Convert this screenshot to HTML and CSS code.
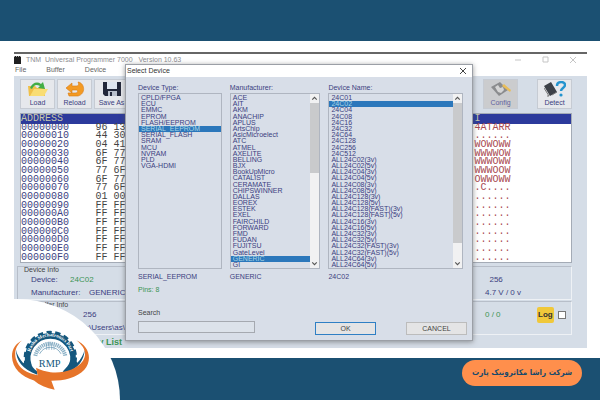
FILE: index.html
```
<!DOCTYPE html>
<html lang="en">
<head>
<meta charset="utf-8">
<title>TNM Universal Programmer 7000</title>
<link rel="stylesheet" href="styles.css">
</head>
<body>
<header class="band"></header>
<main class="stage">
  <div class="app">
    <div class="titlebar">
      <span class="chip"></span>
      <span class="app-title">TNM&nbsp; Universal Programmer 7000&nbsp;&nbsp; Version 10.63</span>
      <svg class="win-controls" viewBox="0 0 66 8"><path d="M2 4h6M30 1h5v5h-5zM57 1l6 6M63 1l-6 6"/></svg>
    </div>
    <nav class="menu"><a href="#">File</a><a href="#">Buffer</a><a href="#">Device</a></nav>
    <div class="workspace">
      <div class="toolbar">
        <button type="button" class="tool">
          <svg viewBox="0 0 22 16"><path d="M1 5h7l2 2h8v8H2z" fill="#f0c04a"/><path d="M3 15l4-7h14l-4 7z" fill="#f9dd73"/><path d="M3 7C5 2 10 0 14 3l2-2 2 7-7-1 2-2C9 3 7 4 5 8z" fill="#43ad45"/></svg>
          Load</button>
        <button type="button" class="tool">
          <svg viewBox="0 0 22 16"><path d="M2 7l6-5v3h4c3 0 3-2 2-4 7 1 8 12 0 14H5l-1-3h7c3 0 3-2 2-3H8v3z" fill="#f39a23" stroke="#d87a12" stroke-width=".6"/></svg>
          Reload</button>
        <button type="button" class="tool">
          <svg viewBox="0 0 22 16"><path d="M2 1h18v14H4l-2-2z" fill="#23283a"/><path d="M6 1h10v7H6z" fill="#dfe6f0"/><path d="M7 10h9v5H7z" fill="#b9c0cc"/><path d="M9 11h2v4H9z" fill="#23283a"/></svg>
          Save As</button>
        <span class="spacer"></span>
        <button type="button" class="tool off" disabled>
          <svg viewBox="0 0 22 16"><path d="M1 6l9-5 8 8-9 6z" fill="#8b8c8e"/><path d="M5 6l3-2 2 3 3-1 1 3-3 3-3-1z" fill="#d5d5d5"/><path d="M12 5l2-2 7 6-1 2z" fill="#e9bd58"/></svg>
          Config</button>
        <button type="button" class="tool">
          <svg viewBox="0 0 22 16"><path d="M0 5l7-4 6 10-7 4z" fill="#3c4047"/><path d="M0 7l5 8M3 15h2M8 14l5-3" stroke="#777" fill="none"/><path d="M13 5c0-5 8-5 8-1 0 3-4 3-4 6" fill="none" stroke="#2494cf" stroke-width="2.5"/><circle cx="17" cy="14" r="1.6" fill="#2494cf"/></svg>
          Detect</button>
      </div>
      <table class="hex">
        <thead><tr><th class="addr">ADDRESS</th><th class="bytes"></th><th class="ascii">I</th></tr></thead>
        <tbody>
          <tr><td>00000000</td><td>96 13</td><td>4ATARR</td></tr>
          <tr><td>00000010</td><td>44 30</td><td>......</td></tr>
          <tr><td>00000020</td><td>04 41</td><td>WOWOWW</td></tr>
          <tr><td>00000030</td><td>6F 77</td><td>WWWWOW</td></tr>
          <tr><td>00000040</td><td>6F 77</td><td>WWWOWW</td></tr>
          <tr><td>00000050</td><td>77 6F</td><td>WWWOOW</td></tr>
          <tr><td>00000060</td><td>6F 77</td><td>OWWOWW</td></tr>
          <tr><td>00000070</td><td>77 6F</td><td>.C....</td></tr>
          <tr><td>00000080</td><td>01 00</td><td>......</td></tr>
          <tr><td>00000090</td><td>FF FF</td><td>......</td></tr>
          <tr><td>000000A0</td><td>FF FF</td><td>......</td></tr>
          <tr><td>000000B0</td><td>FF FF</td><td>......</td></tr>
          <tr><td>000000C0</td><td>FF FF</td><td>......</td></tr>
          <tr><td>000000D0</td><td>FF FF</td><td>......</td></tr>
          <tr><td>000000E0</td><td>FF FF</td><td>......</td></tr>
          <tr><td>000000F0</td><td>FF FF</td><td>......</td></tr>
        </tbody>
      </table>
      <section class="group">
        <h2>Device Info</h2>
        <div class="line"><span class="key">Device:</span><span class="green">24C02</span><span class="far">&nbsp; 256</span></div>
        <div class="line"><span class="key wide">Manufacturer:</span><span>GENERIC</span><span class="far">4.7 V / 0 v</span></div>
      </section>
      <section class="group">
        <h2 class="inset">Buffer Info</h2>
        <div class="line"><span class="size">256</span><span class="far green">0 / 0</span><label class="log"><b>Log</b><input type="checkbox"></label></div>
        <div class="line"><span class="path">C:\Users\as\</span></div>
      </section>
      <a class="list-link" href="#">My List</a>
    </div>
  </div>

  <section class="dialog" role="dialog" aria-label="Select Device">
    <div class="dialog-title"><span>Select Device</span><button type="button" class="close" aria-label="Close"><svg viewBox="0 0 8 8"><path d="M1 1l6 6M7 1L1 7"/></svg></button></div>
    <div class="pickers">
      <div class="picker">
        <h3>Device Type:</h3>
        <div class="box"><ul>
          <li>CPLD/FPGA</li><li>ECU</li><li>EMMC</li><li>EPROM</li><li>FLASH/EEPROM</li><li class="sel">SERIAL_EEPROM</li><li>SERIAL_FLASH</li><li>SRAM</li><li>MCU</li><li>NVRAM</li><li>PLD</li><li>VGA-HDMI</li>
        </ul></div>
        <p>SERIAL_EEPROM</p>
      </div>
      <div class="picker">
        <h3>Manufacturer:</h3>
        <div class="box"><ul>
          <li>ACE</li><li>AIT</li><li>AKM</li><li>ANACHIP</li><li>APLUS</li><li>ArtsChip</li><li>AsicMicroelect</li><li>ATC</li><li>ATMEL</li><li>AXELITE</li><li>BELLING</li><li>BJX</li><li>BookUpMicro</li><li>CATALIST</li><li>CERAMATE</li><li>CHIPSWINNER</li><li>DALLAS</li><li>EOREX</li><li>ESTEK</li><li>EXEL</li><li>FAIRCHILD</li><li>FORWARD</li><li>FMD</li><li>FUDAN</li><li>FUJITSU</li><li>GateLevel</li><li class="sel">GENERIC</li><li>GI</li>
        </ul><div class="scroll"><svg viewBox="0 0 8 8"><path d="M2 5l2-2 2 2"/></svg><i class="thumb"></i><svg viewBox="0 0 8 8"><path d="M2 3l2 2 2-2"/></svg></div></div>
        <p>GENERIC</p>
      </div>
      <div class="picker">
        <h3>Device Name:</h3>
        <div class="box"><ul>
          <li>24C01</li><li class="sel">24C02</li><li>24C04</li><li>24C08</li><li>24C16</li><li>24C32</li><li>24C64</li><li>24C128</li><li>24C256</li><li>24C512</li><li>ALL24C02(3v)</li><li>ALL24C02(5v)</li><li>ALL24C04(3v)</li><li>ALL24C04(5v)</li><li>ALL24C08(3v)</li><li>ALL24C08(5v)</li><li>ALL24C128(3v)</li><li>ALL24C128(5v)</li><li>ALL24C128(FAST)(3v)</li><li>ALL24C128(FAST)(5v)</li><li>ALL24C16(3v)</li><li>ALL24C16(5v)</li><li>ALL24C32(3v)</li><li>ALL24C32(5v)</li><li>ALL24C32(FAST)(3v)</li><li>ALL24C32(FAST)(5v)</li><li>ALL24C64(3v)</li><li>ALL24C64(5v)</li>
        </ul><div class="scroll"><svg viewBox="0 0 8 8"><path d="M2 5l2-2 2 2"/></svg><i class="thumb long"></i><svg viewBox="0 0 8 8"><path d="M2 3l2 2 2-2"/></svg></div></div>
        <p>24C02</p>
      </div>
    </div>
    <p class="pins">Pins: 8</p>
    <label class="search-label" for="search">Search</label>
    <div class="actions">
      <input id="search" type="text">
      <button type="button" class="ok">OK</button>
      <button type="button" class="cancel">CANCEL</button>
    </div>
  </section>
</main>
<footer class="band foot"><span class="pill" lang="fa" dir="rtl">شرکت راشا مکاترونیک پارت</span></footer>

<div class="corner">
  <svg class="logo" viewBox="30 20 240 200" role="img" aria-label="Rasha Mechatronics Part">
    <path d="M48 88C48 120 67 147 112 163L112 153C101 146 94 136 90 124L80 114L70 128C59 116 51 103 48 88zM254 88C253 119 235 143 199 158L188 153C199 143 207 132 212 121L222 114L232 127C243 116 250 104 254 88z" fill="#14577d"/>
    <clipPath id="top"><path d="M30 20h240v112H30z"/></clipPath>
    <circle cx="151" cy="111" r="75" fill="none" stroke="#14577d" stroke-width="10" stroke-dasharray="16 10.5" pathLength="477" clip-path="url(#top)"/>
    <path d="M87 137A68 68 0 1 1 215 137" fill="none" stroke="#14577d" stroke-width="17"/>
    <path id="arc" d="M94 134A62 62 0 1 1 208 134" fill="none"/>
    <text class="arc-text"><textPath href="#arc" startOffset="50%" text-anchor="middle">Rasha Mechatronics Part</textPath></text>
    <path d="M106 106A46 46 0 0 1 196 106" fill="none" stroke="#8db2c7" stroke-width="12" stroke-dasharray="4 2"/>
    <path d="M119 100A36 36 0 0 1 183 100" fill="none" stroke="#8db2c7" stroke-width="3"/>
    <path d="M140 88V72M147 88V64M155 88V68M162 88V76" fill="none" stroke="#6d9cb7" stroke-width="2"/>
    <path d="M66 60C50 73 42 92 47 113C55 144 82 158 113 164L108 142C124 151 137 153 151 155C190 159 231 148 249 121C263 98 252 77 229 59C267 76 279 116 253 148C231 172 192 181 154 181L164 208C139 202 118 194 102 180C64 169 37 143 36 109C35 87 47 69 66 60z" fill="#e6742a"/>
    <text class="rmp" x="149" y="138" text-anchor="middle">RMP</text>
  </svg>
</div>
</body>
</html>
```
FILE: styles.css
```
* { box-sizing: border-box; }
body {
  margin: 0;
  min-height: 100vh;
  display: flex;
  flex-direction: column;
  position: relative;
  background: #fff;
  color: #3b4080;
  font: 7px/8px "Liberation Sans", Arial, sans-serif;
}
h2, h3, p, ul { margin: 0; padding: 0; font-size: inherit; font-weight: normal; }
a { color: inherit; text-decoration: none; }
button { font: inherit; color: inherit; padding: 0; }

.band { flex: none; height: 41px; background: #1b5072; }
.foot { height: 42px; display: flex; justify-content: flex-end; align-items: flex-start; padding: 2px 18px; }
.pill {
  min-width: 120px;
  padding: 0 8px;
  border-radius: 13px;
  background: #ff8f4c;
  color: #174a6b;
  text-align: center;
  font: bold 8px/26px "DejaVu Sans Condensed", "DejaVu Sans", sans-serif;
}
.stage { flex: 1; position: relative; padding: 11px 13px 8px 14px; }

.app { height: 100%; display: flex; flex-direction: column; border-top: 2px solid #666; }
.titlebar { display: flex; align-items: center; height: 12px; gap: 5px; color: #8c8c90; }
.chip { width: 7px; height: 8px; background: #202020; border-top: 1px dotted #aaa; }
.win-controls { width: 66px; height: 8px; margin-left: auto; margin-right: 8px; fill: none; stroke: #c5c5c5; }
.menu { display: flex; gap: 20px; height: 10px; padding-left: 1px; color: #666; }
.workspace { flex: 1; padding: 3px 15px 0 3px; background: #d5dde7; }

.toolbar { display: flex; gap: 2px; padding-left: 3px; }
.tool {
  width: 35px;
  height: 30px;
  display: flex;
  flex-direction: column;
  align-items: center;
  justify-content: center;
  gap: 2px;
  border: 1px solid #c6cbd3;
  background: #e6e8ec;
  white-space: nowrap;
}
.tool svg { width: 22px; height: 16px; }
.spacer { flex: 1; }
.off { margin-right: 17px; background: #cbccce; color: #6262a0; }

.hex {
  width: calc(100% - 3px);
  height: 150px;
  margin: 4px 0 3px 3px;
  border-collapse: collapse;
  table-layout: fixed;
  background: #fff;
  border: 1px solid #a4abb6;
  font: 10px/8px "Liberation Mono", monospace;
}
.hex th, .hex td { padding: 0; text-align: left; }
.hex th { height: 10px; background: #2c3a9c; color: #c6c7ab; font-weight: normal; }
.hex td:nth-child(2) { color: #444; }
.hex td:nth-child(3) { color: #a94a50; }
.addr { width: 75px; }
.ascii { width: 97px; }

.group { display: flex; flex-direction: column; height: 34px; margin-bottom: 1px; border: 1px solid #b7bec9; border-right-color: #eef1f5; border-bottom-color: #eef1f5; }
.group h2 { padding-left: 6px; line-height: 6px; color: #444; }
.group .inset { padding-left: 18px; }
.line { display: flex; align-items: center; height: 13px; padding: 0 4px 0 13px; font-size: 8px; }
.key { width: 39px; }
.wide { width: 58px; }
.far { width: 82px; margin-left: auto; }
.green, .pins, .list-link { color: #3c9455; }
.size { padding-left: 52px; }
.path { padding-left: 50px; }
.line .far:not(:last-child) { width: 52px; }
.log { display: flex; align-items: center; gap: 4px; width: 30px; color: #333; }
.log b { padding: 4px 1px; border-radius: 2px; background: #f0c83a; }
.log input { appearance: none; width: 8px; height: 8px; flex: none; margin: 0; border: 1px solid #777; background: #fff; }
.list-link { display: block; padding-left: 74px; font: bold 9px/12px "Liberation Sans", Arial, sans-serif; }

.dialog {
  position: absolute;
  top: 23px;
  left: 125px;
  right: 127px;
  border: 1px solid #9b9fa6;
  background: #d8dee8;
  box-shadow: 0 1px 5px #5559;
  padding-bottom: 5px;
}
.dialog-title { display: flex; align-items: center; justify-content: space-between; height: 12px; padding: 0 5px 0 1px; background: #fff; color: #333; }
.close { display: flex; border: 0; background: none; }
.close svg { width: 8px; height: 8px; fill: none; stroke: #444; }
.pickers { display: grid; grid-template-columns: 84fr 91fr 135fr; gap: 8px; padding: 6px 9px 0 12px; }
.box { display: flex; height: 176px; margin-bottom: 4px; border: 1px solid #afb5c0; }
.picker h3 { line-height: 10px; }
.picker p { line-height: 8px; }
.box ul { flex: 1; display: grid; grid-template-rows: repeat(28, 1fr); padding-top: 1px; list-style: none; }
.box li { min-height: 0; display: flex; align-items: center; padding-left: 2px; line-height: 6px; white-space: nowrap; }
.box .sel { background: #2b77bb; color: #a9d6e4; }
.scroll { width: 9px; display: flex; flex-direction: column; background: #f1f1f2; }
.scroll svg { width: 9px; height: 9px; flex: none; fill: none; stroke: #555; }
.thumb { height: 70px; margin-bottom: auto; background: #c9cacc; }
.long { height: 140px; }
.pins { padding: 5px 12px 0; }
.search-label { display: block; padding: 15px 12px 2px; color: #444; }
.actions { display: flex; align-items: center; padding: 0 5px 0 12px; }
.actions input { width: 117px; height: 12px; margin: 0 auto 0 0; padding: 0 2px; border: 1px solid #a5a9b0; background: #dce2ea; font: inherit; }
.actions button { width: 61px; height: 13px; margin-top: 3px; border: 1px solid #bcbcbc; background: #e4e4e5; color: #444; }
.actions .ok { border-color: #2f7fc4; margin-right: 30px; }

.corner { position: absolute; left: 0; bottom: 0; width: 120px; height: 101px; border-top-right-radius: 103px 101px; background: #fff; overflow: hidden; }
.logo { position: absolute; left: 10px; top: 28px; width: 80px; height: 67px; }
.arc-text { font: bold 15px "Liberation Serif", serif; fill: #fff; }
.rmp { font: 31px "Liberation Serif", serif; fill: #14577d; }
```
